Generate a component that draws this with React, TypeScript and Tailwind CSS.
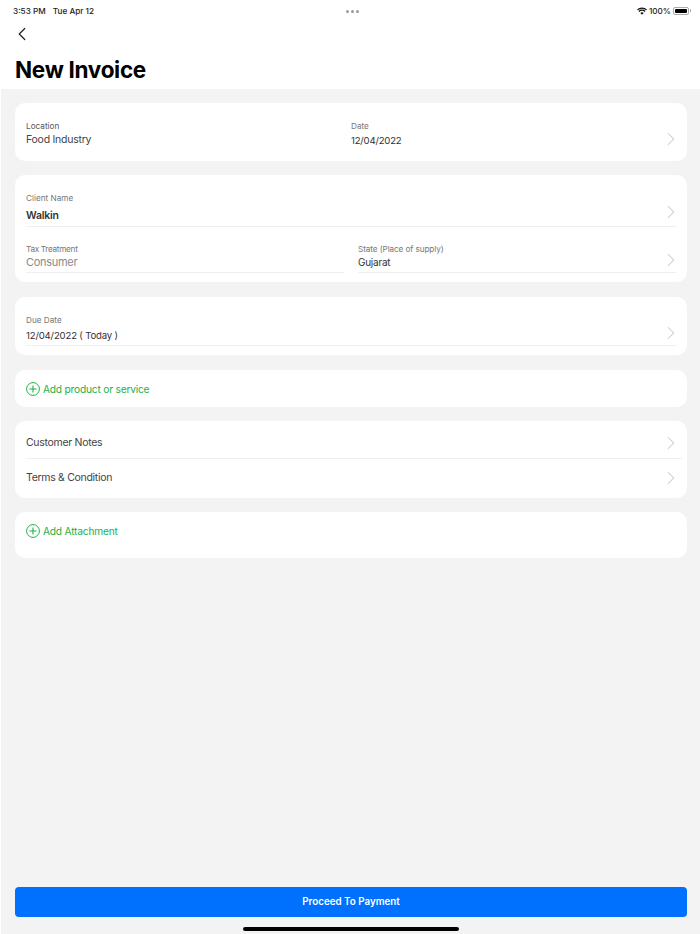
import { ChevronLeft, ChevronRight } from "lucide-react";

function Chevron() {
  return <ChevronRight className="shrink-0 text-[#c8c8c8]" size={22} strokeWidth={1.1} />;
}

function AddRow({ label }: { label: string }) {
  return (
    <div className="flex items-center gap-[3px] text-[#22b04b]">
      <svg width="14" height="14" viewBox="0 0 14 14" fill="none" stroke="currentColor" strokeWidth="1" className="shrink-0">
        <circle cx="7" cy="7" r="6.4" />
        <path d="M7 3.4V10.6M3.4 7H10.6" strokeWidth="1.1" />
      </svg>
      <span className="text-[10.2px] tracking-[-0.2px] leading-[18px]">{label}</span>
    </div>
  );
}

export default function App() {
  return (
    <div className="w-[700px] h-[934px] flex flex-col bg-white overflow-hidden font-['Inter',sans-serif] relative">
      {/* status bar */}
      <div className="h-[22px] shrink-0 pl-[13px] pr-[9px] flex items-center justify-between text-[8.2px] font-medium text-[#222]">
        <div className="flex gap-[7px] w-[200px]">
          <span>3:53 PM</span>
          <span>Tue Apr 12</span>
        </div>
        <div className="flex gap-[2px]">
          <span className="w-[3px] h-[3px] rounded-full bg-[#9a9a9a]" />
          <span className="w-[3px] h-[3px] rounded-full bg-[#9a9a9a]" />
          <span className="w-[3px] h-[3px] rounded-full bg-[#9a9a9a]" />
        </div>
        <div className="flex items-center justify-end gap-[2px] w-[200px]">
          <svg width="10" height="8" viewBox="0 0 20 15" fill="#111">
            <path d="M10 15 6.6 11.4a5 5 0 0 1 6.8 0L10 15ZM4.6 9.3 2.9 7.5a10.4 10.4 0 0 1 14.2 0l-1.7 1.8a7.9 7.9 0 0 0-10.8 0ZM1.7 6.2 0 4.4a14.6 14.6 0 0 1 20 0l-1.7 1.8a12.1 12.1 0 0 0-16.6 0Z" />
          </svg>
          <span>100%</span>
          <div className="flex items-center gap-[1px]">
            <div className="w-[16px] h-[8px] rounded-[2px] border border-[#aaa] p-[1px]">
              <div className="w-full h-full bg-black rounded-[1px]" />
            </div>
            <div className="w-[1px] h-[3px] bg-[#aaa]" />
          </div>
        </div>
      </div>

      {/* header */}
      <div className="h-[67px] shrink-0 px-[15px]">
        <ChevronLeft className="text-[#222] -ml-[4px] mt-[1px]" size={22} strokeWidth={1.3} />
        <h1 className="mt-[10px] text-[22.5px] tracking-[-0.3px] leading-[30px] font-bold text-black">New Invoice</h1>
      </div>

      {/* form */}
      <div className="flex-1 ml-[1px] bg-[#f3f3f3] pt-[14px] pl-[14px] pr-[13px] flex flex-col relative">
        <div className="flex flex-col gap-[14.4px]">
          <div className="h-[58px] bg-white rounded-[10px] pl-[11px] pr-[5px] flex">
            <div className="w-[325px] pt-[17px]">
              <div className="text-[8.2px] leading-[12px] text-[#555]">Location</div>
              <div className="text-[10.5px] tracking-[-0.25px] leading-[15px] text-[#444]">Food Industry</div>
            </div>
            <div className="flex-1 pt-[17px]">
              <div className="text-[8.2px] leading-[12px] text-[#777]">Date</div>
              <div className="text-[9.6px] tracking-[-0.2px] leading-[15px] mt-[1px] text-[#333]">12/04/2022</div>
            </div>
            <div className="pt-[25px]">
              <Chevron />
            </div>
          </div>

          <div className="h-[107px] bg-white rounded-[10px] pl-[11px] pr-[11px] pt-[17px]">
            <div className="h-[35px] border-b border-[#efefef] relative">
              <div className="text-[8.2px] leading-[12px] text-[#777]">Client Name</div>
              <div className="text-[10.5px] tracking-[-0.25px] leading-[15px] mt-[4px] font-semibold text-[#333]">Walkin</div>
              <div className="absolute right-[-6px] top-[9px]">
                <Chevron />
              </div>
            </div>
            <div className="flex gap-[14px] mt-[16px]">
              <div className="w-[318px] h-[30px] border-b border-[#efefef]">
                <div className="text-[8.2px] tracking-[-0.3px] leading-[12px] text-[#777]">Tax Treatment</div>
                <div className="text-[11px] tracking-[-0.3px] leading-[14px] text-[#8a8a8a]">Consumer</div>
              </div>
              <div className="flex-1 h-[30px] border-b border-[#efefef] relative">
                <div className="text-[8.2px] tracking-[-0.1px] leading-[12px] text-[#777]">State (Place of supply)</div>
                <div className="text-[10px] tracking-[-0.25px] leading-[15px] text-[#333]">Gujarat</div>
                <div className="absolute right-[-6px] top-[6px]">
                  <Chevron />
                </div>
              </div>
            </div>
          </div>

          <div className="h-[58.6px] bg-white rounded-[10px] pl-[11px] pr-[11px] pt-[17px]">
            <div className="h-[32px] border-b border-[#efefef] relative">
              <div className="text-[8.2px] leading-[12px] text-[#777]">Due Date</div>
              <div className="text-[9.6px] tracking-[-0.17px] leading-[15px] mt-[2px] text-[#333]">12/04/2022 ( Today )</div>
              <div className="absolute right-[-6px] top-[8px]">
                <Chevron />
              </div>
            </div>
          </div>

          <div className="h-[37px] bg-white rounded-[10px] pl-[11px] pt-[1px] flex items-center">
            <AddRow label="Add product or service" />
          </div>

          <div className="h-[76.6px] bg-white rounded-[10px] pl-[11px] pr-[5px]">
            <div className="h-[38px] pt-[6px] flex items-center justify-between border-b border-[#efefef] text-[10.5px] tracking-[-0.3px] text-[#444]">
              <span>Customer Notes</span>
              <Chevron />
            </div>
            <div className="h-[36px] pt-[2px] flex items-center justify-between text-[10.5px] tracking-[-0.3px] text-[#444]">
              <span>Terms &amp; Condition</span>
              <Chevron />
            </div>
          </div>

          <div className="h-[46px] bg-white rounded-[10px] pl-[11px] pt-[10px]">
            <AddRow label="Add Attachment" />
          </div>
        </div>

        <div className="mt-auto mb-[17px] h-[30px] rounded-[4px] bg-[#0070ff] flex items-center justify-center text-white text-[9.8px] font-semibold">
          Proceed To Payment
        </div>

        <div className="absolute left-[242px] bottom-[3px] w-[216px] h-[4px] rounded-full bg-black" />
      </div>
    </div>
  );
}
